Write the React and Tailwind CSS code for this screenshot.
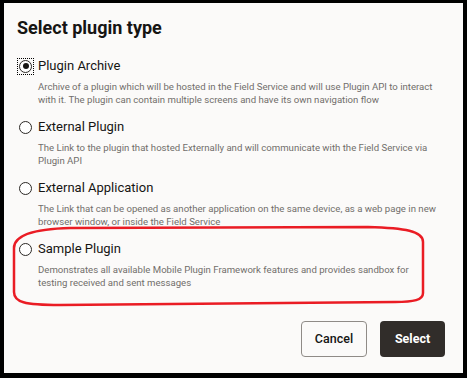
import React, { useState } from "react";

const options = [
  {
    id: "archive",
    label: "Plugin Archive",
    lines: [
      "Archive of a plugin which will be hosted in the Field Service and will use Plugin API to interact",
      "with it. The plugin can contain multiple screens and have its own navigation flow",
    ],
  },
  {
    id: "external",
    label: "External Plugin",
    lines: [
      "The Link to the plugin that hosted Externally and will communicate with the Field Service via",
      "Plugin API",
    ],
  },
  {
    id: "application",
    label: "External Application",
    lines: [
      "The Link that can be opened as another application on the same device, as a web page in new",
      "browser window, or inside the Field Service",
    ],
  },
  {
    id: "sample",
    label: "Sample Plugin",
    lines: [
      "Demonstrates all available Mobile Plugin Framework features and provides sandbox for",
      "testing received and sent messages",
    ],
  },
];

const Radio = ({ checked }) => (
  <span
    className={`flex items-center justify-center w-[17px] h-[17px] ${
      checked ? "outline outline-1 outline-dotted outline-black -outline-offset-1" : ""
    }`}
  >
    <span className="flex items-center justify-center w-[13px] h-[13px] rounded-full border-[1.5px] border-[#2b2825] bg-white">
      {checked && <span className="w-[6px] h-[6px] rounded-full bg-[#161513]" />}
    </span>
  </span>
);

const App = () => {
  const [selected, setSelected] = useState("archive");

  return (
    <div className="relative w-[467px] h-[378px] font-['Roboto',sans-serif]">
      <div className="flex flex-col w-full h-full bg-[#fbfaf9] border-black border-l-4 border-r-4 border-t-[3px] border-b-[5px] pl-[13px] pr-[18px] pt-[13px]">
        <h2 className="text-[18px] leading-[24px] font-bold text-[#161513]">
          Select plugin type
        </h2>

        <div className="flex flex-col gap-[11px] mt-[16px]">
          {options.map((opt) => (
            <label
              key={opt.id}
              className="flex flex-col cursor-pointer"
              onClick={() => setSelected(opt.id)}
            >
              <div className="flex items-center h-[20px]">
                <Radio checked={selected === opt.id} />
                <span className="ml-[4px] text-[13px] leading-[20px] text-[#161513]">
                  {opt.label}
                </span>
              </div>
              <div className="mt-[4px] pl-[21px] text-[9.6px] leading-[13px] text-[#716e6b]">
                {opt.lines.map((line) => (
                  <span key={line} className="block whitespace-nowrap">
                    {line}
                  </span>
                ))}
              </div>
            </label>
          ))}
        </div>

        <div className="flex justify-end gap-[13px] mt-[32px]">
          <button className="w-[66px] h-[36px] rounded-[4px] border border-[#8f8b87] bg-[#fbfaf9] text-[12.5px] font-medium text-[#161513]">
            Cancel
          </button>
          <button className="w-[65px] h-[36px] rounded-[4px] bg-[#312d2a] text-[12.5px] font-bold text-white">
            Select
          </button>
        </div>
      </div>

      <svg
        className="absolute left-0 top-0 pointer-events-none"
        width="467"
        height="378"
        viewBox="0 0 467 378"
      >
        <path
          d="M14 248 C14 236 32 229 70 228 L368 227 C405 228 423 231 423 242 L423 293 C423 300 414 302 395 302 L60 305 C24 305 14 302 14 292 Z"
          fill="none"
          stroke="#ea1c24"
          strokeWidth="2.5"
        />
      </svg>
    </div>
  );
};

export default App;
